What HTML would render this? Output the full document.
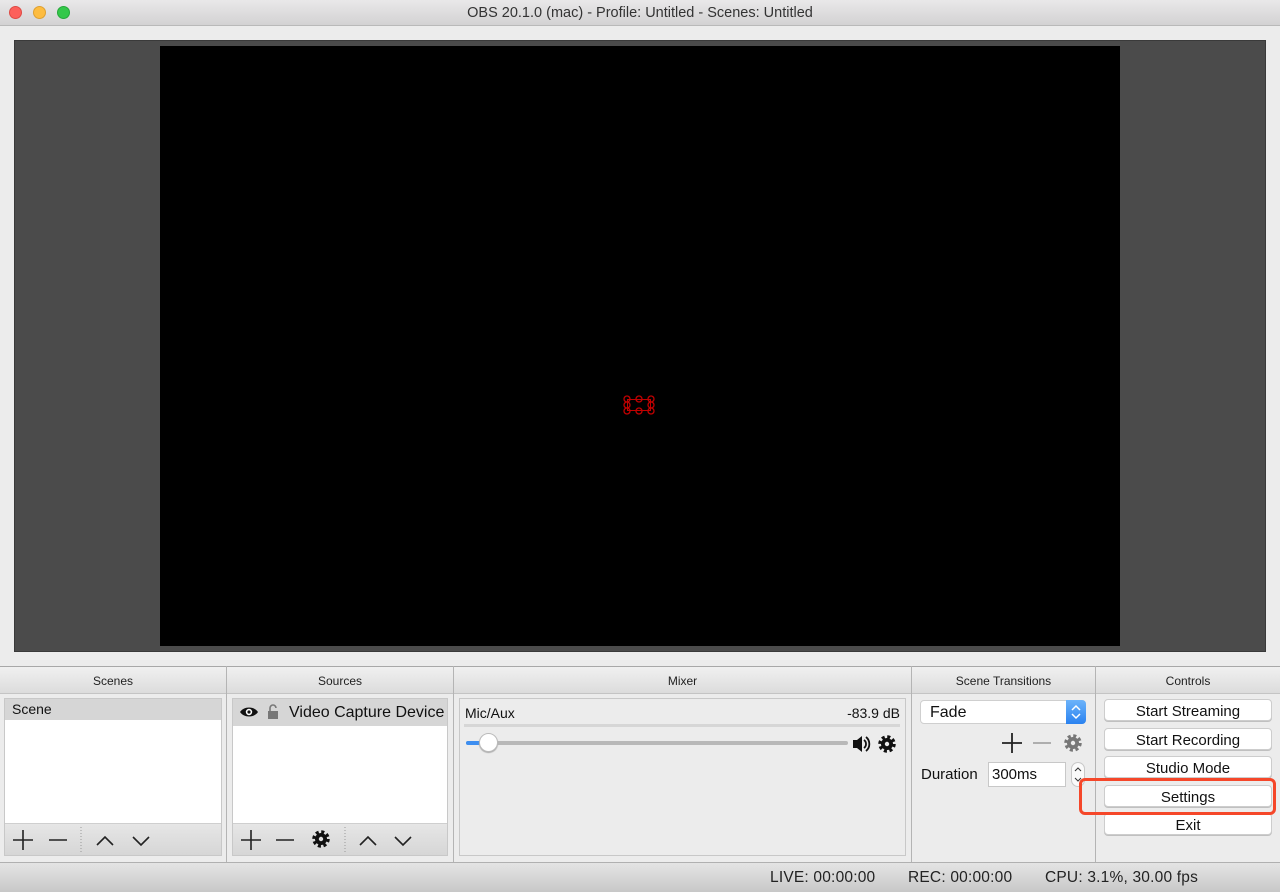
<!DOCTYPE html><html><head><meta charset="utf-8"><style>
*{margin:0;padding:0;box-sizing:border-box}
body{width:1280px;height:892px;background:#ececec;font-family:"Liberation Sans",sans-serif;position:relative;overflow:hidden;color:#111}
.a{position:absolute}
.title{left:0;top:0;width:1280px;height:26px;background:linear-gradient(#e9e8e9,#d3d2d3);border-bottom:1px solid #b9b9b9;text-align:center;font-size:14.5px;line-height:26px;color:#333}
.dot{width:13px;height:13px;border-radius:50%;top:6px}
.hdr{top:666px;height:28px;background:linear-gradient(#f0f0f0,#dcdcdc);border-top:1px solid #a8a8a8;border-bottom:1px solid #c4c4c4;font-size:12px;text-align:center;line-height:28px;color:#222}
.vsep{width:1px;background:#b4b4b4;top:666px;height:196px}
.list{background:#fff;border:1px solid #c8c8c8}
.tb{background:linear-gradient(#e6e6e6,#d6d6d6);border-top:1px solid #cfcfcf}
.btn{left:1104px;width:168px;height:22px;background:#fff;border:1px solid #cdcdcd;border-radius:4px;font-size:15px;text-align:center;line-height:23px;box-shadow:0 1px 0 #c0c0c0}
.st{font-size:15.5px;top:869px;color:#222;letter-spacing:0.2px}
</style></head><body>
<div class="a title">OBS 20.1.0 (mac) - Profile: Untitled - Scenes: Untitled</div>
<div class="a dot" style="left:9px;background:#fc605b;border:1px solid #de4a44"></div>
<div class="a dot" style="left:33px;background:#fdbc40;border:1px solid #dea030"></div>
<div class="a dot" style="left:57px;background:#34c84a;border:1px solid #26a83a"></div>

<div class="a" style="left:14px;top:40px;width:1252px;height:612px;background:#4b4b4b;border:1px solid #3a3a3a"></div>
<div class="a" style="left:160px;top:46px;width:960px;height:600px;background:#000"></div>
<div class="a" style="left:627px;top:399px;width:24px;height:12px;border:1px solid #c00000"></div>
<svg class="a" style="left:620px;top:392px" width="40" height="26"><g fill="none" stroke="#c00000" stroke-width="1.3"><circle cx="7" cy="7" r="3"/><circle cx="19" cy="7" r="3"/><circle cx="31" cy="7" r="3"/><circle cx="7" cy="13" r="3"/><circle cx="31" cy="13" r="3"/><circle cx="7" cy="19" r="3"/><circle cx="19" cy="19" r="3"/><circle cx="31" cy="19" r="3"/></g></svg>

<div class="a hdr" style="left:0;width:1280px"></div>
<div class="a hdr" style="left:0;width:226px;border:none;background:none;top:667px">Scenes</div>
<div class="a hdr" style="left:227px;width:226px;border:none;background:none;top:667px">Sources</div>
<div class="a hdr" style="left:454px;width:457px;border:none;background:none;top:667px">Mixer</div>
<div class="a hdr" style="left:912px;width:183px;border:none;background:none;top:667px">Scene Transitions</div>
<div class="a hdr" style="left:1096px;width:184px;border:none;background:none;top:667px">Controls</div>
<div class="a vsep" style="left:226px"></div>
<div class="a vsep" style="left:453px"></div>
<div class="a vsep" style="left:911px"></div>
<div class="a vsep" style="left:1095px"></div>

<div class="a list" style="left:4px;top:698px;width:218px;height:158px"></div>
<div class="a" style="left:5px;top:699px;width:216px;height:21px;background:#d6d6d6;font-size:14px;line-height:20px;padding-left:7px">Scene</div>
<div class="a tb" style="left:5px;top:823px;width:216px;height:32px"></div>
<svg class="a" style="left:5px;top:823px" width="216" height="32"><g stroke="#222" stroke-width="1.6" fill="none"><path d="M8 17h20M18 7v20M44 17h18"/><path d="M92 22l8-8 8 8M128 14l8 8 8-8"/></g><path d="M76 4v26" stroke="#999" stroke-dasharray="1 2"/></svg>

<div class="a list" style="left:232px;top:698px;width:216px;height:158px"></div>
<div class="a" style="left:233px;top:699px;width:214px;height:27px;background:#d6d6d6;font-size:16px;line-height:28px;padding-left:56px">Video Capture Device</div>
<svg class="a" style="left:238px;top:703px" width="48" height="20"><path d="M2 9c4-6 14-6 18 0c-4 6-14 6-18 0z" fill="#111"/><circle cx="11" cy="9" r="3.2" fill="#fff"/><circle cx="11" cy="9" r="1.6" fill="#111"/><rect x="30" y="8" width="10" height="8" fill="#777"/><path d="M32 8V5a3 3 0 0 1 6 0" stroke="#777" stroke-width="1.6" fill="none"/></svg>
<div class="a tb" style="left:233px;top:823px;width:214px;height:32px"></div>
<svg class="a" style="left:233px;top:823px" width="214" height="32"><g stroke="#222" stroke-width="1.6" fill="none"><path d="M8 17h20M18 7v20M43 17h18"/><path d="M127 22l8-8 8 8M162 14l8 8 8-8"/></g><circle cx="88" cy="16" r="7" fill="none" stroke="#111" stroke-width="3.5" stroke-dasharray="3 2.5"/><circle cx="88" cy="16" r="6" fill="#111"/><circle cx="88" cy="16" r="2.2" fill="#e0e0e0"/><path d="M112 4v26" stroke="#999" stroke-dasharray="1 2"/></svg>

<div class="a" style="left:459px;top:698px;width:447px;height:158px;border:1px solid #c8c8c8;background:#ececec"></div>
<div class="a" style="left:465px;top:705px;font-size:14px">Mic/Aux</div>
<div class="a" style="left:800px;top:705px;width:100px;text-align:right;font-size:14px">-83.9 dB</div>
<div class="a" style="left:464px;top:724px;width:436px;height:3px;background:#d6d6d6"></div>
<div class="a" style="left:466px;top:741px;width:382px;height:4px;background:#b8b8b8;border-radius:2px"></div>
<div class="a" style="left:466px;top:741px;width:20px;height:4px;background:#3d8ef0;border-radius:2px"></div>
<div class="a" style="left:479px;top:733px;width:19px;height:19px;border-radius:50%;background:#fff;border:1px solid #bbb;box-shadow:0 1px 1px #aaa"></div>
<svg class="a" style="left:851px;top:734px" width="48" height="20"><path d="M2 6h4l5-4v16l-5-4H2z" fill="#111"/><path d="M13 6a5 5 0 0 1 0 8M15 3a9 9 0 0 1 0 14" stroke="#111" stroke-width="1.8" fill="none"/><circle cx="36" cy="10" r="7" fill="none" stroke="#111" stroke-width="3.5" stroke-dasharray="3 2.5"/><circle cx="36" cy="10" r="6" fill="#111"/><circle cx="36" cy="10" r="2.2" fill="#ececec"/></svg>

<div class="a" style="left:920px;top:700px;width:166px;height:24px;background:#fff;border:1px solid #cfcfcf;border-radius:4px;font-size:16px;line-height:23px;padding-left:9px">Fade</div>
<div class="a" style="left:1066px;top:700px;width:20px;height:24px;background:linear-gradient(#6cb3fa,#2a82f0);border-radius:0 4px 4px 0"></div>
<svg class="a" style="left:1066px;top:700px" width="20" height="24"><path d="M6 10l4-4 4 4M6 14l4 4 4-4" stroke="#fff" stroke-width="1.5" fill="none"/></svg>
<svg class="a" style="left:1000px;top:732px" width="86" height="22"><path d="M2 11h20M12 1v20" stroke="#222" stroke-width="1.8"/><path d="M33 11h18" stroke="#999" stroke-width="1.6"/><circle cx="73" cy="11" r="7" fill="none" stroke="#777" stroke-width="3.5" stroke-dasharray="3 2.5"/><circle cx="73" cy="11" r="6" fill="#777"/><circle cx="73" cy="11" r="2.2" fill="#ececec"/></svg>
<div class="a" style="left:921px;top:766px;font-size:15px">Duration</div>
<div class="a" style="left:988px;top:762px;width:78px;height:25px;background:#fff;border:1px solid #c8c8c8;font-size:15px;line-height:24px;padding-left:3px">300ms</div>
<div class="a" style="left:1071px;top:762px;width:14px;height:25px;border:1px solid #c8c8c8;border-radius:7px;background:#fafafa"></div>
<svg class="a" style="left:1071px;top:762px" width="14" height="25"><path d="M4 9l3-3 3 3M4 16l3 3 3-3" stroke="#333" fill="none"/></svg>

<div class="a btn" style="top:699px">Start Streaming</div>
<div class="a btn" style="top:728px">Start Recording</div>
<div class="a btn" style="top:756px">Studio Mode</div>
<div class="a btn" style="top:785px">Settings</div>
<div class="a btn" style="top:813px">Exit</div>
<div class="a" style="left:1079px;top:778px;width:197px;height:37px;border:3px solid #f5472a;border-radius:6px"></div>

<div class="a" style="left:0;top:862px;width:1280px;height:30px;background:linear-gradient(#e4e4e4,#c8c8c8);border-top:1px solid #b0b0b0"></div>
<div class="a st" style="left:770px">LIVE: 00:00:00</div>
<div class="a st" style="left:908px">REC: 00:00:00</div>
<div class="a st" style="left:1045px">CPU: 3.1%, 30.00 fps</div>
</body></html>
